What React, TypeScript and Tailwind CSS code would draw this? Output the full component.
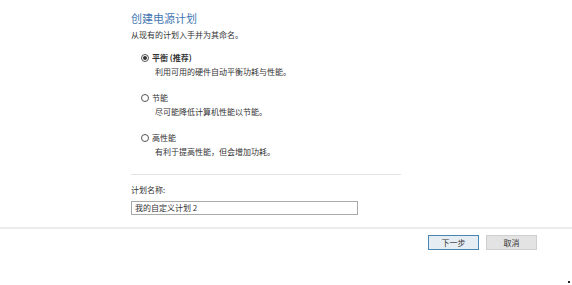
import React from 'react';

const options = [
  { label: '平衡 (推荐)', desc: '利用可用的硬件自动平衡功耗与性能。', checked: true },
  { label: '节能', desc: '尽可能降低计算机性能以节能。', checked: false },
  { label: '高性能', desc: '有利于提高性能，但会增加功耗。', checked: false },
];

function Radio({ checked }: { checked: boolean }) {
  return (
    <span className="flex h-[8px] w-[8px] items-center justify-center rounded-full border border-[#555] bg-white">
      {checked && <span className="h-[4px] w-[4px] rounded-full bg-[#333]" />}
    </span>
  );
}

export default function App() {
  return (
    <div className="relative h-[285px] w-[572px] overflow-hidden bg-white font-['Noto_Sans_CJK_SC',sans-serif] text-[#333]">
      {/* Main content */}
      <div className="h-[227px] pl-[131px] pt-[11px]">
        <h1 className="text-[11px] leading-[14px] text-[#4677b0]">创建电源计划</h1>
        <p className="mt-[5px] text-[8px] leading-[10px]">从现有的计划入手并为其命名。</p>

        <div className="mt-[13px] flex flex-col gap-[16px] pl-[10px]">
          {options.map((o) => (
            <div key={o.label} className="flex flex-col">
              <div className="flex items-center gap-[3px] text-[8px] leading-[10px]">
                <Radio checked={o.checked} />
                <span className={o.checked ? 'font-bold' : ''}>{o.label}</span>
              </div>
              <p className="mt-[4px] pl-[14px] text-[8px] leading-[10px]">{o.desc}</p>
            </div>
          ))}
        </div>

        <div className="mt-[17px] h-px w-[270px] bg-[#e2e2e2]" />

        <p className="mt-[10px] text-[8px] leading-[10px]">计划名称:</p>
        <div className="mt-[6px] flex h-[14px] w-[227px] items-center border border-[#a9a9a9] bg-white pl-[3px] text-[8px] leading-[10px]">
          我的自定义计划 2
        </div>
      </div>

      {/* Divider */}
      <div className="h-[2px] w-full bg-[#ececec]" />

      {/* Actions */}
      <div className="flex justify-end gap-[7px] pr-[35px] pt-[6px]">
        <button className="flex h-[15px] w-[51px] items-center justify-center border border-[#4a86b4] bg-[#e6eef4] text-[8px] leading-[10px] text-[#333]">
          下一步
        </button>
        <button className="flex h-[15px] w-[51px] items-center justify-center border border-[#cfcfcf] bg-[#e3e3e3] text-[8px] leading-[10px] text-[#333]">
          取消
        </button>
      </div>

      <span className="absolute left-[568px] top-[281px] h-[2px] w-[2px] bg-[#222]" />
    </div>
  );
}
